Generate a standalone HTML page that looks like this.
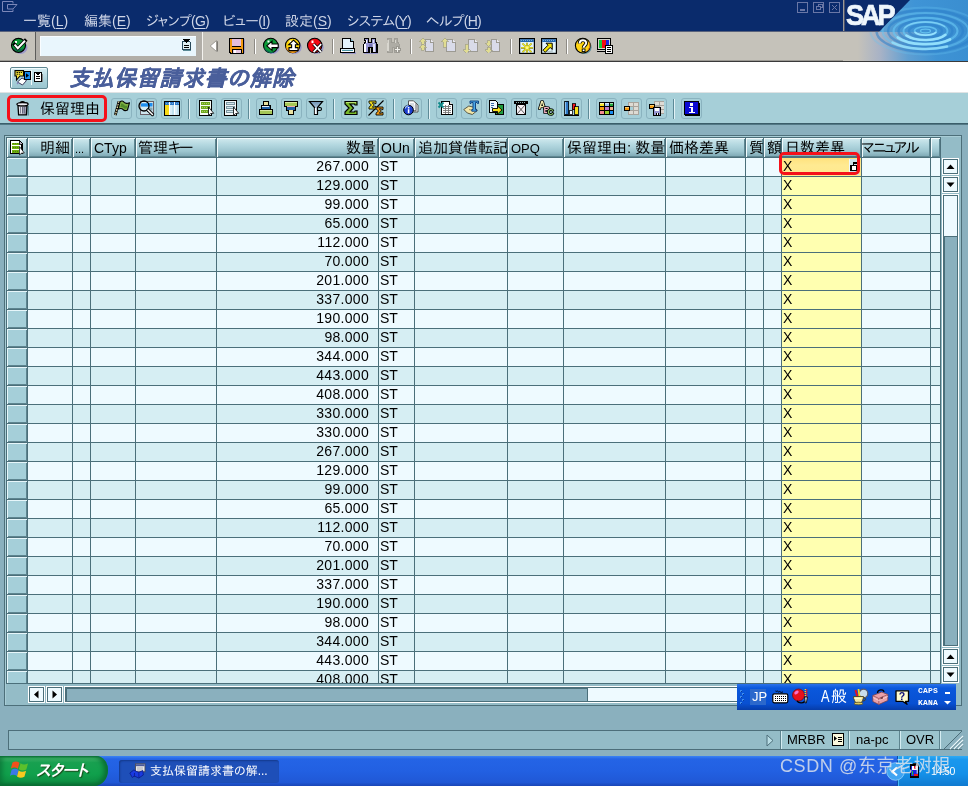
<!DOCTYPE html>
<html lang="ja"><head><meta charset="utf-8"><title>支払保留請求書の解除</title>
<style>
*{box-sizing:border-box;margin:0;padding:0}
html,body{width:968px;height:786px;overflow:hidden}
body{position:relative;will-change:transform;background:#8ab0be;font-family:"Liberation Sans","IPAPGothic","IPAGothic",sans-serif;font-size:14px;color:#000;line-height:1}
.abs{position:absolute}
svg{position:absolute;overflow:visible}
#menubar{left:0;top:0;width:968px;height:31px;background:#0a2b6c}
#menubar span.m{position:absolute;top:13px;color:#cdd4e6;font-size:14px;white-space:nowrap;line-height:16px}
#menubar u{text-decoration:underline;text-underline-offset:2px}
#stdbar{left:0;top:31px;width:968px;height:30px;background:#c5c2ba;border-top:1px solid #aeaba4}
#stdline{left:0;top:61px;width:968px;height:1px;background:#3a3a3a}
#titlebar{left:0;top:62px;width:968px;height:30px;background:#fff}
#titleline{left:0;top:92px;width:968px;height:1px;background:#dfe3e4}
#appbar{left:0;top:93px;width:968px;height:30px;background:#a6cfd8}
#appline{left:0;top:123px;width:968px;height:2px;background:linear-gradient(#2f505c,#5f8794)}
#title{left:69px;top:66px;font-size:22px;font-weight:bold;font-style:italic;color:#4a5f9b;-webkit-text-stroke:.2px #4a5f9b;white-space:nowrap;line-height:26px;letter-spacing:0.6px}
.tb{position:absolute;top:98px;width:21px;height:21px;border:1px solid #8ab3bf;border-radius:3px}
.tb svg{left:1px;top:1px;width:16px;height:16px}
.sep{position:absolute;top:99px;width:2px;height:20px;border-left:1px solid #5d8a97;border-right:1px solid #e2f2f6}
.ssep{position:absolute;top:39px;width:2px;height:15px;border-left:1px solid #8d8a84;border-right:1px solid #fff}
#frame{left:4px;top:135px;width:958px;height:571px;border:1px solid #4d6f7a;background:#94bcc7;box-shadow:inset 1px 1px 0 #a9cdd6}
#grid{left:6px;top:137px;width:935px;height:547px;overflow:hidden;background:#4b6f7a}
.r{position:absolute;left:0;width:934px;height:18px}
.r i{position:absolute;top:0;height:18px;font-style:normal;font-size:14px;line-height:16px;white-space:nowrap;overflow:hidden}
.r.a i{background:#eefaff}
.r.b i{background:#d6eef3}
.r i.s{left:1px;width:20px;background:#a5cfd9;box-shadow:inset 1px 1px 0 #e6f6fa,inset -1px -1px 0 #5d848f}
.r i.y{background:#ffffb0}
.r i.q{text-align:right;padding-right:9px;letter-spacing:.3px}
.r i.t{padding-left:1px}
.h{position:absolute;top:1px;height:19px;font-size:15px;line-height:19px;white-space:nowrap;overflow:hidden;background:linear-gradient(#d2eaef 0,#b4d8e0 35%,#9cc5cf 70%,#7ba6b2 100%);box-shadow:inset 1px 1px 0 #f2fbfd,inset -1px -1px 0 #5f8792;padding-left:3px}
.h b{font-weight:normal;font-size:14px}
.h b.d{font-size:11px;margin-left:-1px}
.sb{position:absolute;width:17px;height:17px;background:#eefaff;border:1px solid #fff;box-shadow:inset 0 0 0 1px #4b6f7a}
.sb svg{left:0;top:0;width:15px;height:15px}
.trk{position:absolute;background:#8ab0be;border:1px solid #fff;box-shadow:inset 1px 1px 0 1px #4b6f7a, inset -1px -1px 0 0 #4b6f7a}
.thumb{position:absolute;background:#eefaff;box-shadow:inset 0 0 0 1px #4b6f7a}
#status{left:8px;top:730px;width:954px;height:20px;border:1px solid #4d6f7a;background:#94bcc7;border-right:none}
.st{position:absolute;top:731px;height:18px;font-size:13px;line-height:18px;white-space:nowrap;background:#9bc4cd;border-left:1px solid #5d848f;box-shadow:inset 1px 0 0 #d4ecf1;padding-left:6px}
#taskbar{left:0;top:756px;width:968px;height:30px;background:linear-gradient(#3a84f4 0,#2464e6 10%,#2260e2 50%,#2058d6 88%,#1a46b6 100%)}
#start{left:0;top:756px;width:108px;height:30px;border-radius:0 12px 14px 0/0 14px 16px 0;background:linear-gradient(#0c7a3a 0,#3fb46a 7%,#18a050 22%,#10a04c 60%,#0e9044 85%,#0a6e34 100%);box-shadow:inset -4px 0 5px #0a6e34,inset 3px 0 4px rgba(10,110,52,.6);color:#fff;font-size:16px;letter-spacing:-.6px;font-weight:bold;font-style:italic;line-height:30px;padding-left:36px;white-space:nowrap;text-shadow:1px 1px 1px #1a4a1a}
#task{left:119px;top:760px;width:160px;height:23px;border-radius:3px;background:#1e4fb8;box-shadow:inset 1px 1px 2px #143a8c;color:#fff;font-size:12px;line-height:22px;padding-left:31px;white-space:nowrap}
#tray{left:897px;top:756px;width:71px;height:30px;background:linear-gradient(#2eaaf4 0,#1a98ee 12%,#1590e8 60%,#107ad0 100%);border-left:1px solid #0e4fa8;box-shadow:inset 1px 0 0 #44b8f8}
#clock{left:931px;top:764px;color:#fff;font-size:10.5px;line-height:14px;letter-spacing:-.5px}
#wm{left:780px;top:754px;font-size:18px;letter-spacing:.6px;line-height:24px;color:rgba(226,229,236,.82);white-space:nowrap;font-family:"Liberation Sans","Noto Sans CJK SC",sans-serif}
#ime{left:737px;top:684px;width:219px;height:26px;background:linear-gradient(#2a72ea 0,#0a58dc 16%,#0850d2 75%,#063ca8 100%)}
#ime span{position:absolute;color:#fff;white-space:nowrap}
.h s{text-decoration:none;letter-spacing:-2px}
</style></head>
<body>
<div id="menubar" class="abs">
<span class="m" style="left:23px">一覧(<u>L</u>)</span>
<span class="m" style="left:84px">編集(<u>E</u>)</span>
<span class="m" style="left:146px;letter-spacing:-.73px">ジャンプ(<u>G</u>)</span>
<span class="m" style="left:223px;letter-spacing:-.47px">ビュー(<u>I</u>)</span>
<span class="m" style="left:285px">設定(<u>S</u>)</span>
<span class="m" style="left:347px;letter-spacing:-.7px">システム(<u>Y</u>)</span>
<span class="m" style="left:426px;letter-spacing:-.75px">ヘルプ(<u>H</u>)</span>
<svg style="left:2px;top:1px;width:16px;height:11px" viewBox="0 0 16 11" fill="none" stroke="#7b87b9" stroke-width="1"><path d="M11 2.500v-2h-10.500v10h10.500v-2"/><path d="M15 3.500h-9.500v4.500h5.500z"/></svg>
</div>
<div id="stdbar" class="abs"></div>
<div class="abs" style="left:0;top:31px;width:968px;height:1px;background:#59627c"></div>
<div class="abs" style="left:35px;top:32px;width:167px;height:29px;background:#b1aea8;border-left:1px solid #5c5c5a"></div>
<div class="abs" style="left:202px;top:32px;width:1px;height:29px;background:#f4f3ef"></div>
<div id="cmd" class="abs" style="left:40px;top:36px;width:156px;height:20px;background:#e9f6fd;box-shadow:inset 1px 1px 0 #fafdff"></div>
<div class="abs" style="left:0;top:60px;width:968px;height:1px;background:#9b9993"></div>
<div id="stdline" class="abs"></div>
<!-- enter / check -->
<svg style="left:10px;top:37px;width:18px;height:18px" viewBox="0 0 18 18"><ellipse cx="10.5" cy="10.5" rx="7" ry="6.5" fill="#9b99c9"/><circle cx="8.5" cy="8.3" r="7" fill="#0b9a38" stroke="#000" stroke-width="1.2"/><path d="M3 11a6.3 6.3 0 0 0 11 0a8 5 0 0 1-11 0z" fill="#0a6a4a"/><rect x="5" y="4" width="2" height="2" fill="#fff"/><path d="M4.6 7.6l3.2 3.6L15 3.8" fill="none" stroke="#000" stroke-width="3.6" stroke-linecap="square"/><path d="M4.6 7.6l3.2 3.6L15 3.8" fill="none" stroke="#fff" stroke-width="2"/></svg>
<!-- command field dropdown -->
<svg style="left:181px;top:39px;width:11px;height:12px" viewBox="0 0 11 12" shape-rendering="crispEdges"><path d="M1.5 2.5h7l1 1v7h-8z" fill="#dff0f4" stroke="#27485a"/><path d="M2 11.5h8" stroke="#5a8a96"/><path d="M1 0h8l-4 4z" fill="#000"/><path d="M3 6.5h5M3 8.5h5" stroke="#000"/></svg>
<!-- small back triangle -->
<svg style="left:209px;top:39px;width:10px;height:14px" viewBox="0 0 10 14"><path d="M8.3 2.2v10.4" stroke="#7b7974" stroke-width="1.4"/><path d="M7.5 1.5v11L1.2 7z" fill="#fff" stroke="#9b9993" stroke-width="1"/></svg>
<!-- save -->
<svg style="left:229px;top:38px;width:16px;height:16px" viewBox="0 0 16 16" shape-rendering="crispEdges"><path d="M1 .5h13.5v14.5h-13l-1-1v-13z" fill="#f39a12" stroke="#000"/><rect x="15" y="1" width="1" height="14" fill="#9b99c9"/><rect x="3" y="1" width="9" height="7" fill="#e3bddc"/><rect x="3" y="0" width="9" height="1" fill="#000"/><rect x="3" y="8" width="9" height="1" fill="#000"/><rect x="3" y="11" width="9" height="4" fill="#e9c8e2" stroke="#000"/><rect x="5" y="12" width="2" height="3" fill="#fff"/></svg>
<div class="ssep" style="left:254px"></div>
<!-- back (green) -->
<svg style="left:262px;top:37px;width:19px;height:18px" viewBox="0 0 19 18"><ellipse cx="10.5" cy="10.3" rx="7.2" ry="6.6" fill="#9b99c9"/><circle cx="8.7" cy="8.5" r="7.2" fill="#0b9a38" stroke="#000" stroke-width="1.1"/><path d="M2.2 10a6.8 6.8 0 0 0 11 4.6a9 7 0 0 1-11-4.600z" fill="#0a6a52"/><rect x="5.500" y="3.500" width="2" height="2" fill="#fff"/><path d="M4.800 8.800l5.200-4.600v2.800h6.200v3.600h-6.200v2.800z" fill="#fff" stroke="#000" stroke-width="1.1" stroke-linejoin="miter"/></svg>
<!-- exit (yellow) -->
<svg style="left:284px;top:37px;width:19px;height:18px" viewBox="0 0 19 18"><ellipse cx="10.500" cy="10.300" rx="7.200" ry="6.600" fill="#9b99c9"/><circle cx="8.700" cy="8.500" r="7.200" fill="#ffd80a" stroke="#000" stroke-width="1.100"/><path d="M1.900 9.500a6.800 6.800 0 0 0 13.400 1.200a9 8 0 0 1-13.400-1.200z" fill="#f29a18"/><rect x="5.500" y="3.500" width="2" height="2" fill="#fff"/><path d="M9.500 3.200l4.800 4.600h-2.900v2.800h2.600v3h-9v-3h2.600v-2.800h-2.900z" fill="#fff" stroke="#000" stroke-width="1.100"/></svg>
<!-- cancel (red) -->
<svg style="left:306px;top:37px;width:19px;height:18px" viewBox="0 0 19 18"><ellipse cx="10.500" cy="10.300" rx="7.200" ry="6.600" fill="#9b99c9"/><circle cx="8.700" cy="8.500" r="7.200" fill="#f20a12" stroke="#000" stroke-width="1.100"/><path d="M2 10.500a6.800 6.800 0 0 0 9 4.600a9 7 0 0 1-9-4.600z" fill="#b0060c"/><rect x="5.500" y="3.500" width="2" height="2.600" fill="#fff"/><path d="M7.600 7.200l7.600 8M15.200 7.200l-7.600 8" stroke="#000" stroke-width="3.400"/><path d="M7.600 7.200l7.600 8M15.200 7.200l-7.600 8" stroke="#fff" stroke-width="1.700"/></svg>
<div class="ssep" style="left:332px"></div>
<!-- print -->
<svg style="left:340px;top:38px;width:17px;height:16px" viewBox="0 0 17 16" shape-rendering="crispEdges"><rect x="2" y="14" width="14" height="2" fill="#9b99c9"/><path d="M2.500 .5h8l2.500 2.500v8h-10.500z" fill="#e5f3fc" stroke="#000"/><path d="M10.500 .5v2.500h2.500" fill="#7fb4c4" stroke="#000"/><rect x=".5" y="10.500" width="14" height="4" fill="#fff" stroke="#000"/><rect x="2" y="12" width="11" height="1" fill="#4d98a8"/><rect x="1" y="11" width="13" height="1" fill="#d9ecf6"/></svg>
<!-- find -->
<svg style="left:362px;top:38px;width:17px;height:16px" viewBox="0 0 17 16" shape-rendering="crispEdges"><rect x="2" y="14.500" width="14" height="1.500" fill="#9b99c9"/><path d="M2.500 .5h4v4h3v-4h4v3.500l1.500 2v8.500h-5v-5h-3v5h-5v-8.500l1.500-2z" fill="#9a98d2" stroke="#000" stroke-width="1.100"/><rect x="2" y="6" width="1.500" height="8" fill="#fff"/><rect x="3.500" y="1.500" width="1.500" height="3.500" fill="#fff"/><rect x="11" y="6" width="1.500" height="8" fill="#e2e2f6"/><rect x="10.500" y="1.500" width="1.200" height="3.500" fill="#e2e2f6"/><rect x="6.500" y="5.500" width="3" height="3" fill="#7876b8"/></svg>
<!-- find next (disabled) -->
<svg style="left:385px;top:38px;width:17px;height:16px" viewBox="0 0 17 16" shape-rendering="crispEdges"><path d="M2.500 .5h3.500v4h3v-4h3.500v3.500l1.500 2v8.500h-5v-5h-2v5h-4.500v-8.500l1-2z" fill="#aeaca5" stroke="#a09e97" stroke-width="1"/><rect x="2" y="5" width="1.500" height="8" fill="#d8d6cf"/><rect x="3" y="1.500" width="1.200" height="3" fill="#d8d6cf"/><rect x="10" y="1.500" width="1.200" height="3" fill="#d8d6cf"/><path d="M9 11.500h7M12.500 8v7" stroke="#9a9891" stroke-width="3.400"/><path d="M10 11.500h5M12.500 9v5" stroke="#f1f0ec" stroke-width="1.500"/></svg>
<div class="ssep" style="left:410px"></div>
<!-- page navigation (disabled) -->
<svg style="left:419px;top:38px;width:16px;height:15px" viewBox="0 0 16 15" shape-rendering="crispEdges"><path d="M6.500 1.500h5l3 3v9h-8z" fill="#d9dbe9" stroke="#9c9a92"/><path d="M11.500 1.500v3h3" fill="#e9e9f2" stroke="#9c9a92"/><path d="M3.500 0l3.500 3.500h-2v2.500h-3v-2.500h-2zM3.500 6l3.500 3.500h-2v2.500h-3v-2.500h-2z" fill="#e1dd92" stroke="#a8a68c" stroke-width=".8"/></svg>
<svg style="left:441px;top:38px;width:16px;height:15px" viewBox="0 0 16 15" shape-rendering="crispEdges"><path d="M5.500 1.500h6l3 3v9h-9z" fill="#d9dbe9" stroke="#9c9a92"/><path d="M11.500 1.500v3h3" fill="#e9e9f2" stroke="#9c9a92"/><path d="M3.500 0l3.500 3.500h-2v5.500h-3v-5.500h-2z" fill="#e1dd92" stroke="#a8a68c" stroke-width=".8"/></svg>
<svg style="left:463px;top:38px;width:16px;height:16px" viewBox="0 0 16 16" shape-rendering="crispEdges"><path d="M5.500 1.500h6l3 3v9h-9z" fill="#d9dbe9" stroke="#9c9a92"/><path d="M11.500 1.500v3h3" fill="#e9e9f2" stroke="#9c9a92"/><path d="M3.500 15l3.500-3.500h-2v-5.500h-3v5.500h-2z" fill="#e1dd92" stroke="#a8a68c" stroke-width=".8"/></svg>
<svg style="left:485px;top:38px;width:16px;height:16px" viewBox="0 0 16 16" shape-rendering="crispEdges"><path d="M6.500 1.500h5l3 3v9h-8z" fill="#d9dbe9" stroke="#9c9a92"/><path d="M11.500 1.500v3h3" fill="#e9e9f2" stroke="#9c9a92"/><path d="M3.500 8.500l3.500-3.500h-2v-2.500h-3v2.500h-2zM3.500 15l3.500-3.500h-2v-2.500h-3v2.500h-2z" fill="#e1dd92" stroke="#a8a68c" stroke-width=".8"/></svg>
<div class="ssep" style="left:510px"></div>
<!-- new session -->
<svg style="left:519px;top:38px;width:16px;height:16px" viewBox="0 0 16 16"><rect x=".6" y=".6" width="14.800" height="14.800" fill="#e3f4fb" stroke="#000" stroke-width="1.200"/><rect x="1.200" y="1.200" width="13.600" height="2.800" fill="#2465ad"/><path d="M2 2.500h12" stroke="#8fc2e6" stroke-width=".8" stroke-dasharray="1 1"/><path d="M8 4.800v10M2 9.800h12M3.500 5.500l9 8.600M12.500 5.500l-9 8.600" stroke="#6a6a30" stroke-width="1.700"/><path d="M8 4.800v10M2 9.800h12M3.500 5.500l9 8.600M12.500 5.500l-9 8.600" stroke="#fbf01a" stroke-width="1.100"/><circle cx="8" cy="9.800" r="1.500" fill="#fdf68a"/></svg>
<!-- shortcut -->
<svg style="left:541px;top:38px;width:16px;height:16px" viewBox="0 0 16 16"><rect x=".6" y=".6" width="14.800" height="14.800" fill="#e3f4fb" stroke="#000" stroke-width="1.200"/><rect x="1.200" y="1.200" width="13.600" height="2.800" fill="#2465ad"/><path d="M2 2.500h12" stroke="#8fc2e6" stroke-width=".8" stroke-dasharray="1 1"/><path d="M11 6v7.500h-6" fill="none" stroke="#b7c6cc" stroke-width="1.600"/><path d="M5 5.200h6.200v6.200l-2-2-5 5-2.200-2.200 5-5z" fill="#f4e408" stroke="#000" stroke-width="1"/></svg>
<div class="ssep" style="left:566px"></div>
<!-- help -->
<svg style="left:574px;top:37px;width:19px;height:18px" viewBox="0 0 19 18"><ellipse cx="10.300" cy="10.200" rx="7.300" ry="6.800" fill="#5f8f9a"/><circle cx="8.800" cy="8.600" r="7.400" fill="#ffd414" stroke="#000" stroke-width="1.100"/><path d="M14.500 3.800a7 7 0 0 1-3 11.300a9 9 0 0 0 3-11.300z" fill="#ee8a12"/><path d="M5.600 6.400c0-4.200 6.600-4.200 6.600-.4c0 2.400-2.600 2.400-2.600 4.800" fill="none" stroke="#000" stroke-width="3.600"/><path d="M5.600 6.400c0-4.200 6.600-4.200 6.600-.4c0 2.400-2.600 2.400-2.600 4.800" fill="none" stroke="#fff" stroke-width="1.900"/><rect x="8.200" y="12" width="2.800" height="2.600" fill="#fff" stroke="#000" stroke-width=".9"/></svg>
<!-- layout / monitor -->
<svg style="left:597px;top:38px;width:16px;height:16px" viewBox="0 0 16 16" shape-rendering="crispEdges"><rect x="0" y="0" width="14" height="12" fill="#000"/><rect x="1" y="1" width="12" height="10" fill="#d4d2cb"/><rect x="2" y="2" width="3" height="8" fill="#1ec43a"/><rect x="5" y="2" width="4" height="8" fill="#f20a12"/><rect x="9" y="2" width="3" height="8" fill="#1a22e0"/><rect x="1" y="12" width="12" height="1" fill="#d4d2cb"/><rect x="0" y="13" width="9" height="1" fill="#000"/><rect x="8" y="7" width="8" height="9" fill="#000"/><rect x="9" y="8" width="6" height="7" fill="#fff"/><rect x="10" y="9" width="4" height="1" fill="#000"/><rect x="10" y="11" width="4" height="1" fill="#000"/><rect x="10" y="13" width="4" height="1" fill="#000"/></svg>
<!-- window controls -->
<svg style="left:797px;top:2px;width:44px;height:11px" viewBox="0 0 44 11" shape-rendering="crispEdges"><g fill="none" stroke="#6977a6"><rect x=".5" y=".5" width="10" height="10"/><rect x="16.500" y=".5" width="10" height="10"/><rect x="32.500" y=".5" width="10" height="10"/><path d="M3 8h5M3 7h5" /><rect x="21.500" y="2.500" width="4" height="3"/><rect x="19.500" y="4.500" width="4" height="3" fill="#0a2b6c"/><path d="M35 3l5 5M40 3l-5 5" shape-rendering="auto"/></g></svg>
<!-- SAP logo & water -->
<svg style="left:843px;top:0;width:125px;height:61px" viewBox="0 0 125 61">
<defs>
<linearGradient id="wfade" x1="0" x2="1" y1="0" y2="0"><stop offset="0" stop-color="#c5c2ba"/><stop offset=".12" stop-color="#c5c2ba"/><stop offset=".3" stop-color="#a7b2c6"/><stop offset=".52" stop-color="#5f9fd2"/><stop offset=".75" stop-color="#3f93d4"/><stop offset="1" stop-color="#3a8fd2"/></linearGradient>
<linearGradient id="wtop" x1="0" x2="1" y1="0" y2="0"><stop offset="0" stop-color="#5b9fd0"/><stop offset=".4" stop-color="#3f94d6"/><stop offset="1" stop-color="#3a8ed0"/></linearGradient>
<clipPath id="wc"><path d="M67 0H125V61H0V32H36z"/></clipPath>
</defs>
<rect x="0" y="0" width="125" height="31" fill="#0a2b6c"/>
<rect x="0" y="0" width="1" height="31" fill="#9a9a98"/><rect x="1" y="0" width="1" height="31" fill="#4a5068"/>
<rect x="0" y="32" width="125" height="29" fill="url(#wfade)"/>
<path d="M67 0H125V32H36z" fill="url(#wtop)"/>
<g clip-path="url(#wc)" fill="none">
<ellipse cx="82.5" cy="31" rx="16.5" ry="6.6" stroke="#2c7fca" stroke-width="2.400" opacity=".55"/>
<ellipse cx="82.5" cy="31" rx="27" ry="11" stroke="#2c7fca" stroke-width="2.400" opacity=".55"/>
<ellipse cx="82.5" cy="31" rx="37.5" ry="15.6" stroke="#2c7fca" stroke-width="2.400" opacity=".55"/>
<ellipse cx="82.5" cy="31" rx="49" ry="20.7" stroke="#2c7fca" stroke-width="2.400" opacity=".55"/>
<ellipse cx="82.5" cy="31" rx="5" ry="1.8" stroke="#66c4f2" stroke-width="1.2" opacity="0.9"/>
<ellipse cx="82.5" cy="31" rx="11" ry="4.2" stroke="#66c4f2" stroke-width="1.6" opacity="0.85"/>
<ellipse cx="82.5" cy="31" rx="22" ry="9" stroke="#66c4f2" stroke-width="2" opacity="0.75"/>
<ellipse cx="82.5" cy="31" rx="32" ry="13.2" stroke="#66c4f2" stroke-width="2.2" opacity="0.65"/>
<ellipse cx="82.5" cy="31" rx="43" ry="18" stroke="#66c4f2" stroke-width="2.2" opacity="0.5"/>
<ellipse cx="82.5" cy="31" rx="55" ry="23.5" stroke="#66c4f2" stroke-width="2" opacity="0.3"/>
<path d="M92.8 32.4A11 4.2 0 0 1 72.2 32.4" stroke="#9be6ff" stroke-width="1.8" opacity="0.9" stroke-linecap="round"/>
<path d="M102.4 34.8A22 9 0 0 1 63.4 35.5" stroke="#9be6ff" stroke-width="2.6" opacity="0.9" stroke-linecap="round"/>
<path d="M107.0 39.5A32 13.2 0 0 1 54.8 37.6" stroke="#9be6ff" stroke-width="2.8" opacity="0.85" stroke-linecap="round"/>
<path d="M104.0 46.6A43 18 0 0 1 49.6 42.6" stroke="#9be6ff" stroke-width="2.6" opacity="0.75" stroke-linecap="round"/>
<path d="M61.8 27.9A22 9 0 0 1 101.6 26.5" stroke="#9be6ff" stroke-width="1.4" opacity="0.5" stroke-linecap="round"/>
</g>
<text x="3" y="25.200" font-family="Liberation Sans,sans-serif" font-weight="bold" font-size="29.500" fill="#eef6fc" stroke="#eef6fc" stroke-width=".7" letter-spacing="-3.400" textLength="46.500" lengthAdjust="spacingAndGlyphs">SAP</text>
</svg>
<div id="titlebar" class="abs"></div>
<div id="titleline" class="abs"></div>
<div id="title" class="abs">支払保留請求書の解除</div>
<div class="abs" style="left:10px;top:67px;width:38px;height:22px;border:1px solid #5f8792;border-radius:2px;background:linear-gradient(#d8eef2,#a9d1da 60%,#9cc6d0);box-shadow:inset 1px 1px 0 #f2fbfd"></div>
<svg style="left:14px;top:70px;width:17px;height:16px" viewBox="0 0 17 16"><path d="M8 8l4.500 2.500-4 4.500-5-3z" fill="#fff" stroke="#3a3a5a" stroke-width="1"/><path d="M4.500 12.500l-1.500 1.500" stroke="#8a88c0" stroke-width="1.200"/><rect x="10.500" y="1.500" width="5.500" height="8" fill="#1a8cf0" stroke="#000" stroke-width="1" shape-rendering="crispEdges"/><path d="M12 3.200v4.600l3-2.300z" fill="#000"/><path d="M1 .6h8.500v5.400h-3.500l-3.500 4v-4h-1.500z" fill="#f8e83a" stroke="#000" stroke-width="1.100" stroke-linejoin="miter"/><path d="M2.500 2.500h5.500M2.500 4.200h4" stroke="#000" stroke-width=".9" stroke-dasharray="1.500 .7"/></svg>
<div class="abs" style="left:31px;top:70px;width:1px;height:15px;background:#f2fbfd"></div>
<svg style="left:34px;top:71px;width:9px;height:12px" viewBox="0 0 9 12" shape-rendering="crispEdges"><path d="M.5 1.500h7v9h-7z" fill="#fff" stroke="#000"/><path d="M1 1h6l-3 3.500z" fill="#000"/><path d="M2 5.500h4M2 7.500h4" stroke="#000"/><rect x="8" y="3" width="1" height="8" fill="#8a8a8a"/></svg>
<div id="appbar" class="abs"></div>
<div id="appline" class="abs"></div>
<!-- red highlighted button -->
<div class="abs" style="left:7px;top:95px;width:100px;height:27px;border:3px solid #f5111a;border-radius:5px"></div>
<svg style="left:16px;top:101px;width:13px;height:15px" viewBox="0 0 13 15"><defs><linearGradient id="tg" x1="0" x2="1" y1="0" y2="0"><stop offset="0" stop-color="#f4f4f8"/><stop offset=".45" stop-color="#c9c9d6"/><stop offset="1" stop-color="#8e8ea6"/></linearGradient></defs><rect x="11.500" y="5" width="1.500" height="9.500" fill="#5f8f9a"/><path d="M2 4.500h9l-.6 9.300h-7.800z" fill="url(#tg)" stroke="#000" stroke-width="1.300"/><path d="M4.800 6v6.500M6.500 6v6.500M8.200 6v6.500" stroke="#4e4e66" stroke-width=".9"/><path d="M5.600 6v6.500" stroke="#fff" stroke-width=".7"/><ellipse cx="6.500" cy="3.200" rx="5.600" ry="1.700" fill="#eeeef4" stroke="#000" stroke-width="1.300"/><path d="M4.500 1.300c1-.9 3-.9 4 0" fill="none" stroke="#000" stroke-width="1.200"/></svg>
<div class="abs" style="left:40px;top:100px;font-size:15px;line-height:18px;white-space:nowrap">保留理由</div>
<!-- toolbar buttons -->
<div class="tb" style="left:111px"><svg viewBox="0 0 16 16"><path d="M6 1.300L2.300 15.200" stroke="#000" stroke-width="2.700"/><path d="M6 1.300L2.300 15.200" stroke="#ecdca6" stroke-width="1.300" stroke-dasharray="1.700 1"/><path d="M7 1.800c1.500-1.200 3-1 4.200.6c1.200 1.300 3 1.200 5.300.3l-2 7.300c-1.800.9-3.300.9-4.300-.4c-1.200-1.500-2.800-1.400-5-.6z" fill="#7fb044" stroke="#000" stroke-width="1.100" stroke-linejoin="round"/><path d="M8.300 3.500c1.300-.4 2 .6 2.800 1.500s2 1 3.300.7l-.9 3c-1.200.3-2 .1-2.800-.8s-1.800-1.200-3.300-.9z" fill="#4f8a2a"/></svg></div>
<div class="tb" style="left:136px"><svg viewBox="0 0 16 16"><rect x="2.500" y="1.500" width="13" height="13" fill="#cfe6ee" stroke="#6a5f66" stroke-width="1"/><rect x="3.500" y="3" width="11" height="3.500" fill="#1e8ef0"/><rect x="11" y="7.500" width="3.500" height="3" fill="#86a6b2"/><circle cx="6" cy="6" r="5" fill="none" stroke="#000" stroke-width="1.300"/><circle cx="6" cy="6" r="4" fill="#dff2fa" opacity=".55"/><rect x="3" y="3.500" width="7" height="3" fill="#1e8ef0"/><path d="M10 10l4.500 4.500" stroke="#000" stroke-width="3.200" stroke-linecap="round"/><path d="M10 10l4.500 4.500" stroke="#fff" stroke-width="1.500" stroke-linecap="round"/></svg></div>
<div class="tb" style="left:161px"><svg viewBox="0 0 16 16" shape-rendering="crispEdges"><rect x="1" y="1" width="16" height="15" fill="#000"/><rect x="2" y="2" width="14" height="13" fill="#d9eef8"/><rect x="2" y="2" width="14" height="3" fill="#2c78c6"/><path d="M3 3.500h13" stroke="#6aa8e4" stroke-dasharray="1 1"/><rect x="2" y="5" width="4" height="10" fill="#f8da18"/><rect x="6" y="2" width="1" height="13" fill="#fff"/><rect x="11" y="2" width="1" height="13" fill="#fff"/><rect x="9" y="5" width="2" height="10" fill="#bfe0ee"/><rect x="14" y="5" width="2" height="10" fill="#bfe0ee"/></svg></div>
<div class="sep" style="left:188px"></div>
<div class="tb" style="left:196px"><svg viewBox="0 0 16 16" shape-rendering="crispEdges"><rect x="1" y="0" width="13" height="16" fill="#000"/><rect x="2" y="1" width="11" height="14" fill="#f6faf4"/><rect x="3" y="2" width="9" height="3" fill="#6fa81e"/><rect x="3" y="6" width="9" height="3" fill="#6fa81e"/><rect x="3" y="10" width="9" height="3" fill="#6fa81e"/><path d="M4 3.500h7M4 7.500h7M4 11.500h7" stroke="#a8d060" stroke-dasharray="1 1"/><path d="M10.500 7v8.500l2.200-2 3 -.2z" fill="#fff" stroke="#000" stroke-width=".8" shape-rendering="auto"/></svg></div>
<div class="tb" style="left:221px"><svg viewBox="0 0 16 16" shape-rendering="crispEdges"><rect x="1" y="0" width="13" height="16" fill="#000"/><rect x="2" y="1" width="11" height="14" fill="#f3f7f8"/><rect x="3" y="2" width="9" height="3" fill="#7e98a2"/><rect x="4" y="3" width="7" height="1" fill="#d3e7ee"/><rect x="3" y="6" width="9" height="3" fill="#7e98a2"/><rect x="4" y="7" width="7" height="1" fill="#d3e7ee"/><rect x="3" y="10" width="9" height="3" fill="#7e98a2"/><rect x="4" y="11" width="7" height="1" fill="#d3e7ee"/><path d="M10.500 7v8.500l2.200-2 3 -.2z" fill="#fff" stroke="#000" stroke-width=".8" shape-rendering="auto"/></svg></div>
<div class="sep" style="left:248px"></div>
<div class="tb" style="left:256px"><svg viewBox="0 0 16 16" shape-rendering="crispEdges"><rect x="5" y="1" width="6" height="5" fill="#000"/><rect x="6" y="2" width="4" height="4" fill="#e9e1a2"/><rect x="3" y="5" width="10" height="5" fill="#000"/><rect x="4" y="6" width="8" height="3" fill="#1f5fa8"/><rect x="4" y="6" width="7" height="1" fill="#e6f0fa"/><rect x="1" y="9" width="14" height="6" fill="#000"/><rect x="2" y="10" width="12" height="4" fill="#a5c656"/><rect x="2" y="10" width="12" height="1" fill="#d6e8a0"/></svg></div>
<div class="tb" style="left:281px"><svg viewBox="0 0 16 16" shape-rendering="crispEdges"><rect x="1" y="1" width="14" height="6" fill="#000"/><rect x="2" y="2" width="12" height="4" fill="#a5c656"/><rect x="2" y="2" width="12" height="1" fill="#d6e8a0"/><rect x="3" y="6" width="10" height="5" fill="#000"/><rect x="4" y="7" width="8" height="3" fill="#1f5fa8"/><rect x="4" y="6" width="8" height="1" fill="#f4b0b0"/><rect x="5" y="10" width="6" height="5" fill="#000"/><rect x="6" y="10" width="4" height="4" fill="#e9e1a2"/></svg></div>
<div class="tb" style="left:306px"><svg viewBox="0 0 16 16"><defs><linearGradient id="fg" x1="0" x2="0" y1="0" y2="1"><stop offset="0" stop-color="#6f93b4"/><stop offset="1" stop-color="#e8f2f8"/></linearGradient></defs><path d="M1.500 1.500h13l-5 6v7h-3v-7z" fill="url(#fg)" stroke="#000" stroke-width="1.200" stroke-linejoin="miter"/><path d="M7.500 8v6" stroke="#fff" stroke-width="1.400"/><path d="M9.500 10.500h2.500a1.500 1.500 0 0 0 0-3h-1.500" fill="none" stroke="#000" stroke-width="1.100"/></svg></div>
<div class="sep" style="left:333px"></div>
<div class="tb" style="left:341px"><svg viewBox="0 0 16 16"><path d="M2 1.500h12v3.500h-2l-.5-1h-4.500l3.500 4-3.500 4h4.500l.5-1h2v3.500h-12v-2.500l4-4-4-4z" fill="#79ba2a" stroke="#000" stroke-width="1.200" stroke-linejoin="miter"/><path d="M3 2.500h10" stroke="#b8e070" stroke-width="1"/></svg></div>
<div class="tb" style="left:366px"><svg viewBox="0 0 16 16"><path d="M15.500 .5L.5 15.500" stroke="#000" stroke-width="1.100"/><path d="M1 1h7v2.600h-1.200l-.3-.8h-2.200l2 2.200-2 2.200h2.200l.3-.8h1.200v2.600h-7v-1.800l2.400-2.200-2.400-2.200z" fill="#f6e01a" stroke="#000" stroke-width=".9"/><path d="M8 7h7v2.600h-1.200l-.3-.8h-2.200l2 2.200-2 2.200h2.200l.3-.8h1.200v2.600h-7v-1.800l2.400-2.200-2.400-2.200z" fill="#f59a10" stroke="#000" stroke-width=".9"/></svg></div>
<div class="sep" style="left:393px"></div>
<div class="tb" style="left:401px"><svg viewBox="0 0 16 16"><path d="M7.500 2.500h5l2.500 2.500v7h-7.500z" fill="#f4f8fa" stroke="#4a4a4a" stroke-width=".9"/><path d="M5.500 .8h5l2.500 2.500v7.500h-7.500z" fill="#fff" stroke="#4a4a4a" stroke-width=".9"/><path d="M7 4h4M7 6h4.500M7 8h4.500" stroke="#9ab" stroke-width=".8"/><circle cx="5.500" cy="10" r="4.800" fill="#1c3fd0" stroke="#000" stroke-width="1"/><path d="M2.200 8.500a3.600 3.600 0 0 1 3.300-2.800" stroke="#9ec0ff" stroke-width="1.200" fill="none"/><rect x="4.800" y="7" width="1.600" height="1.500" fill="#fff"/><rect x="4.800" y="9.200" width="1.600" height="4" fill="#fff"/></svg></div>
<div class="sep" style="left:428px"></div>
<div class="tb" style="left:436px"><svg viewBox="0 0 16 16" shape-rendering="crispEdges"><path d="M3.500 1.500h8l3 3v10h-11z" fill="#fff" stroke="#000"/><path d="M11.500 1.500v3h3" fill="#d8d8d8" stroke="#000"/><path d="M5 6.500h8M5 8.500h8M5 10.500h8M5 12.500h8M7.500 5v9M10.500 5v9" stroke="#7a7a7a" stroke-width=".9"/><path d="M.5 2.500l5 5M5.500 2.500l-5 5" stroke="#0f8a8a" stroke-width="1.900" shape-rendering="auto"/></svg></div>
<div class="tb" style="left:461px"><svg viewBox="0 0 16 16"><path d="M.8 9.500l5-3.500 6 1.500 2.500 3-5 4-5-1.500z" fill="#f2e6a8" stroke="#4a4a3a" stroke-width=".9"/><path d="M6 9.500l4 1 2-1.500" fill="none" stroke="#8a7a4a" stroke-width=".8"/><path d="M7 1h8.500v2.500h-1l-.4-1h-1.600v7h1.200v1.700h-4.900v-1.700h1.200v-7h-1.600l-.4 1h-1z" fill="#4aa8e8" stroke="#0a3a7a" stroke-width=".9"/></svg></div>
<div class="tb" style="left:486px"><svg viewBox="0 0 16 16" shape-rendering="crispEdges"><rect x="7.500" y="4.500" width="8" height="10" fill="#1e9a3c" stroke="#000"/><path d="M1.500 .5h6l2 2v10h-8z" fill="#f0f8ff" stroke="#000"/><path d="M3 3.500h3M3 5.500h3M3 7.500h2" stroke="#3a6aa8"/><path d="M4.500 8.500h5v-2.500l4.500 4-4.500 4v-2.500h-5z" fill="#f6e01a" stroke="#000" stroke-width=".9" shape-rendering="auto"/></svg></div>
<div class="tb" style="left:511px"><svg viewBox="0 0 16 16" shape-rendering="crispEdges"><rect x="1" y="1" width="14" height="3" fill="#000"/><path d="M3 2.500h10" stroke="#8aa" stroke-dasharray="1 1"/><rect x="3.500" y="4.500" width="9" height="10" fill="#f6f0f4" stroke="#000"/><path d="M4 5l8 9M12 5l-8 9" stroke="#4a4a4a" stroke-width=".9" shape-rendering="auto"/></svg></div>
<div class="tb" style="left:536px"><svg viewBox="0 0 16 16"><g font-family="Liberation Sans,sans-serif" font-weight="bold" stroke="#000" stroke-width="1.700" stroke-linejoin="round" paint-order="stroke"><text x=".5" y="9" font-size="10" fill="#f4ecb0">A</text><text x="5.500" y="12.500" font-size="9" fill="#f2b0c0">B</text><text x="9.500" y="15.300" font-size="8.500" fill="#8ac868">C</text></g></svg></div>
<div class="tb" style="left:561px"><svg viewBox="0 0 16 16" shape-rendering="crispEdges"><rect x="1.500" y="1" width="4" height="13.500" fill="#2f78c4" stroke="#000" stroke-width=".8"/><rect x="2" y="1.500" width="1.200" height="12.500" fill="#8cc0ee"/><rect x="9" y="3.500" width="3.500" height="6" fill="#f01820" stroke="#000" stroke-width=".8"/><rect x="6.500" y="10" width="3" height="4.500" fill="#fff" stroke="#000" stroke-width=".8"/><rect x="11.500" y="6.500" width="3.500" height="8" fill="#f6e01a" stroke="#000" stroke-width=".8"/><rect x="1" y="14.500" width="15" height="1" fill="#000"/></svg></div>
<div class="sep" style="left:588px"></div>
<div class="tb" style="left:596px"><svg viewBox="0 0 16 16" shape-rendering="crispEdges"><rect x=".5" y="2" width="15.500" height="12.800" fill="#000"/><rect x="1.500" y="3" width="4" height="3" fill="#f6e62a"/><rect x="6.500" y="3" width="4" height="3" fill="#9cc4f0"/><rect x="11.500" y="3" width="3.500" height="3" fill="#22a83c"/><rect x="1.500" y="7" width="4" height="3" fill="#f59a10"/><rect x="6.500" y="7" width="4" height="3" fill="#c07ac8"/><rect x="11.500" y="7" width="3.500" height="3" fill="#f2b088"/><rect x="1.500" y="11" width="4" height="3" fill="#f28a92"/><rect x="6.500" y="11" width="4" height="3" fill="#9ad02a"/><rect x="11.500" y="11" width="3.500" height="3" fill="#1a8cf0"/><path d="M1.500 3.500h4M6.500 3.500h4M11.500 3.500h3.500" stroke="#fff" opacity=".6"/></svg></div>
<div class="tb" style="left:621px"><svg viewBox="0 0 16 16" shape-rendering="crispEdges"><rect x="5" y="2" width="11" height="13" fill="#a8a49c"/><g fill="#dedbd4"><rect x="6" y="3" width="4" height="3"/><rect x="11" y="3" width="4" height="3"/><rect x="11" y="7" width="4" height="3"/><rect x="6" y="11" width="4" height="3"/><rect x="11" y="11" width="4" height="3"/></g><rect x="6" y="7" width="4" height="3" fill="#a6cfd8"/><rect x="1.500" y="6.500" width="5" height="4" fill="#f59a10" stroke="#000"/><rect x="2" y="7" width="4" height="1" fill="#fcd070"/></svg></div>
<div class="tb" style="left:646px"><svg viewBox="0 0 16 16" shape-rendering="crispEdges"><rect x="6" y="1" width="10" height="13" fill="#a8a49c"/><g fill="#dedbd4"><rect x="7" y="2" width="4" height="3"/><rect x="12" y="2" width="4" height="3"/><rect x="12" y="6" width="4" height="3"/><rect x="12" y="10" width="4" height="3"/></g><rect x="1.500" y="4.500" width="5" height="4" fill="#f59a10" stroke="#000"/><rect x="2" y="5" width="4" height="1" fill="#fcd070"/><rect x="5.500" y="7.500" width="7" height="7.500" fill="#9a98d2" stroke="#000"/><rect x="7" y="8" width="4" height="3" fill="#fff"/><rect x="7.500" y="12.500" width="3" height="2.500" fill="#000"/><rect x="8.500" y="13" width="1" height="2" fill="#fff"/></svg></div>
<div class="sep" style="left:673px"></div>
<div class="tb" style="left:681px"><svg viewBox="0 0 16 16" shape-rendering="crispEdges"><rect x="15" y="3" width="1.500" height="12.500" fill="#000"/><rect x="2" y="14" width="14" height="1.500" fill="#000"/><rect x="1.500" y="1.500" width="13.500" height="12.500" fill="#0a0ad2" stroke="#000"/><rect x="7" y="3" width="3" height="2.500" fill="#fff"/><path d="M5.500 6.500h4.500v5h2v1.500h-6.500v-1.500h2v-3.500h-2z" fill="#fff"/></svg></div>
<div id="frame" class="abs"></div>
<div id="grid" class="abs">
<div class="h" style="left:1px;width:20px;padding:0"><svg style="left:2px;top:2px;width:16px;height:15px" viewBox="0 0 16 15" shape-rendering="crispEdges"><path d="M1.500 .8h8.500l3 3v10h-11.500z" fill="#fff" stroke="#000" stroke-width="1.200"/><path d="M10 1v3h3" fill="#b8b0c0" stroke="#000" stroke-width=".8"/><rect x="3" y="2.500" width="7" height="2.600" fill="#72b010"/><rect x="3" y="6.300" width="7" height="2.600" fill="#72b010"/><rect x="3" y="10.100" width="7" height="2.600" fill="#72b010"/><path d="M4 3.800h5M4 7.600h5M4 11.400h5" stroke="#4e8808" stroke-dasharray="1 1"/><path d="M10.500 6.500v8.500l2-1.800 2.800-.2z" fill="#fff" stroke="#000" stroke-width=".7" shape-rendering="auto"/></svg></div><div class="h" style="left:22px;width:44px;text-align:right;padding-right:2px">明細</div><div class="h" style="left:67px;width:17px"><b class="d">...</b></div><div class="h" style="left:85px;width:44px"><b>CTyp</b></div><div class="h" style="left:130px;width:80px;padding-left:2px">管理<s>キー</s></div><div class="h" style="left:211px;width:161px;text-align:right;padding-right:2px">数量</div><div class="h" style="left:373px;width:35px;padding-left:2px"><b>OUn</b></div><div class="h" style="left:409px;width:92px">追加貸借転記</div><div class="h" style="left:502px;width:55px"><b style="font-size:13px">OPQ</b></div><div class="h" style="left:558px;width:101px">保留理由: 数量</div><div class="h" style="left:660px;width:79px">価格差異</div><div class="h" style="left:740px;width:17px">質</div><div class="h" style="left:758px;width:17px">額</div><div class="h" style="left:776px;width:79px">日数差異</div><div class="h" style="left:856px;width:68px;padding-left:0;text-indent:-1px"><s>マニュアル</s></div><div class="h" style="left:925px;width:9px"></div>
<div class="r a" style="top:21px"><i class="s"></i><i style="left:22px;width:44px"></i><i style="left:67px;width:17px"></i><i style="left:85px;width:44px"></i><i style="left:130px;width:80px"></i><i class="q" style="left:211px;width:161px">267.000</i><i class="t" style="left:373px;width:35px">ST</i><i style="left:409px;width:92px"></i><i style="left:502px;width:55px"></i><i style="left:558px;width:101px"></i><i style="left:660px;width:79px"></i><i style="left:740px;width:17px"></i><i style="left:758px;width:17px"></i><i class="y t" style="left:776px;width:79px">X</i><i style="left:856px;width:68px"></i><i style="left:925px;width:9px"></i></div>
<div class="r b" style="top:40px"><i class="s"></i><i style="left:22px;width:44px"></i><i style="left:67px;width:17px"></i><i style="left:85px;width:44px"></i><i style="left:130px;width:80px"></i><i class="q" style="left:211px;width:161px">129.000</i><i class="t" style="left:373px;width:35px">ST</i><i style="left:409px;width:92px"></i><i style="left:502px;width:55px"></i><i style="left:558px;width:101px"></i><i style="left:660px;width:79px"></i><i style="left:740px;width:17px"></i><i style="left:758px;width:17px"></i><i class="y t" style="left:776px;width:79px">X</i><i style="left:856px;width:68px"></i><i style="left:925px;width:9px"></i></div>
<div class="r a" style="top:59px"><i class="s"></i><i style="left:22px;width:44px"></i><i style="left:67px;width:17px"></i><i style="left:85px;width:44px"></i><i style="left:130px;width:80px"></i><i class="q" style="left:211px;width:161px">99.000</i><i class="t" style="left:373px;width:35px">ST</i><i style="left:409px;width:92px"></i><i style="left:502px;width:55px"></i><i style="left:558px;width:101px"></i><i style="left:660px;width:79px"></i><i style="left:740px;width:17px"></i><i style="left:758px;width:17px"></i><i class="y t" style="left:776px;width:79px">X</i><i style="left:856px;width:68px"></i><i style="left:925px;width:9px"></i></div>
<div class="r b" style="top:78px"><i class="s"></i><i style="left:22px;width:44px"></i><i style="left:67px;width:17px"></i><i style="left:85px;width:44px"></i><i style="left:130px;width:80px"></i><i class="q" style="left:211px;width:161px">65.000</i><i class="t" style="left:373px;width:35px">ST</i><i style="left:409px;width:92px"></i><i style="left:502px;width:55px"></i><i style="left:558px;width:101px"></i><i style="left:660px;width:79px"></i><i style="left:740px;width:17px"></i><i style="left:758px;width:17px"></i><i class="y t" style="left:776px;width:79px">X</i><i style="left:856px;width:68px"></i><i style="left:925px;width:9px"></i></div>
<div class="r a" style="top:97px"><i class="s"></i><i style="left:22px;width:44px"></i><i style="left:67px;width:17px"></i><i style="left:85px;width:44px"></i><i style="left:130px;width:80px"></i><i class="q" style="left:211px;width:161px">112.000</i><i class="t" style="left:373px;width:35px">ST</i><i style="left:409px;width:92px"></i><i style="left:502px;width:55px"></i><i style="left:558px;width:101px"></i><i style="left:660px;width:79px"></i><i style="left:740px;width:17px"></i><i style="left:758px;width:17px"></i><i class="y t" style="left:776px;width:79px">X</i><i style="left:856px;width:68px"></i><i style="left:925px;width:9px"></i></div>
<div class="r b" style="top:116px"><i class="s"></i><i style="left:22px;width:44px"></i><i style="left:67px;width:17px"></i><i style="left:85px;width:44px"></i><i style="left:130px;width:80px"></i><i class="q" style="left:211px;width:161px">70.000</i><i class="t" style="left:373px;width:35px">ST</i><i style="left:409px;width:92px"></i><i style="left:502px;width:55px"></i><i style="left:558px;width:101px"></i><i style="left:660px;width:79px"></i><i style="left:740px;width:17px"></i><i style="left:758px;width:17px"></i><i class="y t" style="left:776px;width:79px">X</i><i style="left:856px;width:68px"></i><i style="left:925px;width:9px"></i></div>
<div class="r a" style="top:135px"><i class="s"></i><i style="left:22px;width:44px"></i><i style="left:67px;width:17px"></i><i style="left:85px;width:44px"></i><i style="left:130px;width:80px"></i><i class="q" style="left:211px;width:161px">201.000</i><i class="t" style="left:373px;width:35px">ST</i><i style="left:409px;width:92px"></i><i style="left:502px;width:55px"></i><i style="left:558px;width:101px"></i><i style="left:660px;width:79px"></i><i style="left:740px;width:17px"></i><i style="left:758px;width:17px"></i><i class="y t" style="left:776px;width:79px">X</i><i style="left:856px;width:68px"></i><i style="left:925px;width:9px"></i></div>
<div class="r b" style="top:154px"><i class="s"></i><i style="left:22px;width:44px"></i><i style="left:67px;width:17px"></i><i style="left:85px;width:44px"></i><i style="left:130px;width:80px"></i><i class="q" style="left:211px;width:161px">337.000</i><i class="t" style="left:373px;width:35px">ST</i><i style="left:409px;width:92px"></i><i style="left:502px;width:55px"></i><i style="left:558px;width:101px"></i><i style="left:660px;width:79px"></i><i style="left:740px;width:17px"></i><i style="left:758px;width:17px"></i><i class="y t" style="left:776px;width:79px">X</i><i style="left:856px;width:68px"></i><i style="left:925px;width:9px"></i></div>
<div class="r a" style="top:173px"><i class="s"></i><i style="left:22px;width:44px"></i><i style="left:67px;width:17px"></i><i style="left:85px;width:44px"></i><i style="left:130px;width:80px"></i><i class="q" style="left:211px;width:161px">190.000</i><i class="t" style="left:373px;width:35px">ST</i><i style="left:409px;width:92px"></i><i style="left:502px;width:55px"></i><i style="left:558px;width:101px"></i><i style="left:660px;width:79px"></i><i style="left:740px;width:17px"></i><i style="left:758px;width:17px"></i><i class="y t" style="left:776px;width:79px">X</i><i style="left:856px;width:68px"></i><i style="left:925px;width:9px"></i></div>
<div class="r b" style="top:192px"><i class="s"></i><i style="left:22px;width:44px"></i><i style="left:67px;width:17px"></i><i style="left:85px;width:44px"></i><i style="left:130px;width:80px"></i><i class="q" style="left:211px;width:161px">98.000</i><i class="t" style="left:373px;width:35px">ST</i><i style="left:409px;width:92px"></i><i style="left:502px;width:55px"></i><i style="left:558px;width:101px"></i><i style="left:660px;width:79px"></i><i style="left:740px;width:17px"></i><i style="left:758px;width:17px"></i><i class="y t" style="left:776px;width:79px">X</i><i style="left:856px;width:68px"></i><i style="left:925px;width:9px"></i></div>
<div class="r a" style="top:211px"><i class="s"></i><i style="left:22px;width:44px"></i><i style="left:67px;width:17px"></i><i style="left:85px;width:44px"></i><i style="left:130px;width:80px"></i><i class="q" style="left:211px;width:161px">344.000</i><i class="t" style="left:373px;width:35px">ST</i><i style="left:409px;width:92px"></i><i style="left:502px;width:55px"></i><i style="left:558px;width:101px"></i><i style="left:660px;width:79px"></i><i style="left:740px;width:17px"></i><i style="left:758px;width:17px"></i><i class="y t" style="left:776px;width:79px">X</i><i style="left:856px;width:68px"></i><i style="left:925px;width:9px"></i></div>
<div class="r b" style="top:230px"><i class="s"></i><i style="left:22px;width:44px"></i><i style="left:67px;width:17px"></i><i style="left:85px;width:44px"></i><i style="left:130px;width:80px"></i><i class="q" style="left:211px;width:161px">443.000</i><i class="t" style="left:373px;width:35px">ST</i><i style="left:409px;width:92px"></i><i style="left:502px;width:55px"></i><i style="left:558px;width:101px"></i><i style="left:660px;width:79px"></i><i style="left:740px;width:17px"></i><i style="left:758px;width:17px"></i><i class="y t" style="left:776px;width:79px">X</i><i style="left:856px;width:68px"></i><i style="left:925px;width:9px"></i></div>
<div class="r a" style="top:249px"><i class="s"></i><i style="left:22px;width:44px"></i><i style="left:67px;width:17px"></i><i style="left:85px;width:44px"></i><i style="left:130px;width:80px"></i><i class="q" style="left:211px;width:161px">408.000</i><i class="t" style="left:373px;width:35px">ST</i><i style="left:409px;width:92px"></i><i style="left:502px;width:55px"></i><i style="left:558px;width:101px"></i><i style="left:660px;width:79px"></i><i style="left:740px;width:17px"></i><i style="left:758px;width:17px"></i><i class="y t" style="left:776px;width:79px">X</i><i style="left:856px;width:68px"></i><i style="left:925px;width:9px"></i></div>
<div class="r b" style="top:268px"><i class="s"></i><i style="left:22px;width:44px"></i><i style="left:67px;width:17px"></i><i style="left:85px;width:44px"></i><i style="left:130px;width:80px"></i><i class="q" style="left:211px;width:161px">330.000</i><i class="t" style="left:373px;width:35px">ST</i><i style="left:409px;width:92px"></i><i style="left:502px;width:55px"></i><i style="left:558px;width:101px"></i><i style="left:660px;width:79px"></i><i style="left:740px;width:17px"></i><i style="left:758px;width:17px"></i><i class="y t" style="left:776px;width:79px">X</i><i style="left:856px;width:68px"></i><i style="left:925px;width:9px"></i></div>
<div class="r a" style="top:287px"><i class="s"></i><i style="left:22px;width:44px"></i><i style="left:67px;width:17px"></i><i style="left:85px;width:44px"></i><i style="left:130px;width:80px"></i><i class="q" style="left:211px;width:161px">330.000</i><i class="t" style="left:373px;width:35px">ST</i><i style="left:409px;width:92px"></i><i style="left:502px;width:55px"></i><i style="left:558px;width:101px"></i><i style="left:660px;width:79px"></i><i style="left:740px;width:17px"></i><i style="left:758px;width:17px"></i><i class="y t" style="left:776px;width:79px">X</i><i style="left:856px;width:68px"></i><i style="left:925px;width:9px"></i></div>
<div class="r b" style="top:306px"><i class="s"></i><i style="left:22px;width:44px"></i><i style="left:67px;width:17px"></i><i style="left:85px;width:44px"></i><i style="left:130px;width:80px"></i><i class="q" style="left:211px;width:161px">267.000</i><i class="t" style="left:373px;width:35px">ST</i><i style="left:409px;width:92px"></i><i style="left:502px;width:55px"></i><i style="left:558px;width:101px"></i><i style="left:660px;width:79px"></i><i style="left:740px;width:17px"></i><i style="left:758px;width:17px"></i><i class="y t" style="left:776px;width:79px">X</i><i style="left:856px;width:68px"></i><i style="left:925px;width:9px"></i></div>
<div class="r a" style="top:325px"><i class="s"></i><i style="left:22px;width:44px"></i><i style="left:67px;width:17px"></i><i style="left:85px;width:44px"></i><i style="left:130px;width:80px"></i><i class="q" style="left:211px;width:161px">129.000</i><i class="t" style="left:373px;width:35px">ST</i><i style="left:409px;width:92px"></i><i style="left:502px;width:55px"></i><i style="left:558px;width:101px"></i><i style="left:660px;width:79px"></i><i style="left:740px;width:17px"></i><i style="left:758px;width:17px"></i><i class="y t" style="left:776px;width:79px">X</i><i style="left:856px;width:68px"></i><i style="left:925px;width:9px"></i></div>
<div class="r b" style="top:344px"><i class="s"></i><i style="left:22px;width:44px"></i><i style="left:67px;width:17px"></i><i style="left:85px;width:44px"></i><i style="left:130px;width:80px"></i><i class="q" style="left:211px;width:161px">99.000</i><i class="t" style="left:373px;width:35px">ST</i><i style="left:409px;width:92px"></i><i style="left:502px;width:55px"></i><i style="left:558px;width:101px"></i><i style="left:660px;width:79px"></i><i style="left:740px;width:17px"></i><i style="left:758px;width:17px"></i><i class="y t" style="left:776px;width:79px">X</i><i style="left:856px;width:68px"></i><i style="left:925px;width:9px"></i></div>
<div class="r a" style="top:363px"><i class="s"></i><i style="left:22px;width:44px"></i><i style="left:67px;width:17px"></i><i style="left:85px;width:44px"></i><i style="left:130px;width:80px"></i><i class="q" style="left:211px;width:161px">65.000</i><i class="t" style="left:373px;width:35px">ST</i><i style="left:409px;width:92px"></i><i style="left:502px;width:55px"></i><i style="left:558px;width:101px"></i><i style="left:660px;width:79px"></i><i style="left:740px;width:17px"></i><i style="left:758px;width:17px"></i><i class="y t" style="left:776px;width:79px">X</i><i style="left:856px;width:68px"></i><i style="left:925px;width:9px"></i></div>
<div class="r b" style="top:382px"><i class="s"></i><i style="left:22px;width:44px"></i><i style="left:67px;width:17px"></i><i style="left:85px;width:44px"></i><i style="left:130px;width:80px"></i><i class="q" style="left:211px;width:161px">112.000</i><i class="t" style="left:373px;width:35px">ST</i><i style="left:409px;width:92px"></i><i style="left:502px;width:55px"></i><i style="left:558px;width:101px"></i><i style="left:660px;width:79px"></i><i style="left:740px;width:17px"></i><i style="left:758px;width:17px"></i><i class="y t" style="left:776px;width:79px">X</i><i style="left:856px;width:68px"></i><i style="left:925px;width:9px"></i></div>
<div class="r a" style="top:401px"><i class="s"></i><i style="left:22px;width:44px"></i><i style="left:67px;width:17px"></i><i style="left:85px;width:44px"></i><i style="left:130px;width:80px"></i><i class="q" style="left:211px;width:161px">70.000</i><i class="t" style="left:373px;width:35px">ST</i><i style="left:409px;width:92px"></i><i style="left:502px;width:55px"></i><i style="left:558px;width:101px"></i><i style="left:660px;width:79px"></i><i style="left:740px;width:17px"></i><i style="left:758px;width:17px"></i><i class="y t" style="left:776px;width:79px">X</i><i style="left:856px;width:68px"></i><i style="left:925px;width:9px"></i></div>
<div class="r b" style="top:420px"><i class="s"></i><i style="left:22px;width:44px"></i><i style="left:67px;width:17px"></i><i style="left:85px;width:44px"></i><i style="left:130px;width:80px"></i><i class="q" style="left:211px;width:161px">201.000</i><i class="t" style="left:373px;width:35px">ST</i><i style="left:409px;width:92px"></i><i style="left:502px;width:55px"></i><i style="left:558px;width:101px"></i><i style="left:660px;width:79px"></i><i style="left:740px;width:17px"></i><i style="left:758px;width:17px"></i><i class="y t" style="left:776px;width:79px">X</i><i style="left:856px;width:68px"></i><i style="left:925px;width:9px"></i></div>
<div class="r a" style="top:439px"><i class="s"></i><i style="left:22px;width:44px"></i><i style="left:67px;width:17px"></i><i style="left:85px;width:44px"></i><i style="left:130px;width:80px"></i><i class="q" style="left:211px;width:161px">337.000</i><i class="t" style="left:373px;width:35px">ST</i><i style="left:409px;width:92px"></i><i style="left:502px;width:55px"></i><i style="left:558px;width:101px"></i><i style="left:660px;width:79px"></i><i style="left:740px;width:17px"></i><i style="left:758px;width:17px"></i><i class="y t" style="left:776px;width:79px">X</i><i style="left:856px;width:68px"></i><i style="left:925px;width:9px"></i></div>
<div class="r b" style="top:458px"><i class="s"></i><i style="left:22px;width:44px"></i><i style="left:67px;width:17px"></i><i style="left:85px;width:44px"></i><i style="left:130px;width:80px"></i><i class="q" style="left:211px;width:161px">190.000</i><i class="t" style="left:373px;width:35px">ST</i><i style="left:409px;width:92px"></i><i style="left:502px;width:55px"></i><i style="left:558px;width:101px"></i><i style="left:660px;width:79px"></i><i style="left:740px;width:17px"></i><i style="left:758px;width:17px"></i><i class="y t" style="left:776px;width:79px">X</i><i style="left:856px;width:68px"></i><i style="left:925px;width:9px"></i></div>
<div class="r a" style="top:477px"><i class="s"></i><i style="left:22px;width:44px"></i><i style="left:67px;width:17px"></i><i style="left:85px;width:44px"></i><i style="left:130px;width:80px"></i><i class="q" style="left:211px;width:161px">98.000</i><i class="t" style="left:373px;width:35px">ST</i><i style="left:409px;width:92px"></i><i style="left:502px;width:55px"></i><i style="left:558px;width:101px"></i><i style="left:660px;width:79px"></i><i style="left:740px;width:17px"></i><i style="left:758px;width:17px"></i><i class="y t" style="left:776px;width:79px">X</i><i style="left:856px;width:68px"></i><i style="left:925px;width:9px"></i></div>
<div class="r b" style="top:496px"><i class="s"></i><i style="left:22px;width:44px"></i><i style="left:67px;width:17px"></i><i style="left:85px;width:44px"></i><i style="left:130px;width:80px"></i><i class="q" style="left:211px;width:161px">344.000</i><i class="t" style="left:373px;width:35px">ST</i><i style="left:409px;width:92px"></i><i style="left:502px;width:55px"></i><i style="left:558px;width:101px"></i><i style="left:660px;width:79px"></i><i style="left:740px;width:17px"></i><i style="left:758px;width:17px"></i><i class="y t" style="left:776px;width:79px">X</i><i style="left:856px;width:68px"></i><i style="left:925px;width:9px"></i></div>
<div class="r a" style="top:515px"><i class="s"></i><i style="left:22px;width:44px"></i><i style="left:67px;width:17px"></i><i style="left:85px;width:44px"></i><i style="left:130px;width:80px"></i><i class="q" style="left:211px;width:161px">443.000</i><i class="t" style="left:373px;width:35px">ST</i><i style="left:409px;width:92px"></i><i style="left:502px;width:55px"></i><i style="left:558px;width:101px"></i><i style="left:660px;width:79px"></i><i style="left:740px;width:17px"></i><i style="left:758px;width:17px"></i><i class="y t" style="left:776px;width:79px">X</i><i style="left:856px;width:68px"></i><i style="left:925px;width:9px"></i></div>
<div class="r b" style="top:534px"><i class="s"></i><i style="left:22px;width:44px"></i><i style="left:67px;width:17px"></i><i style="left:85px;width:44px"></i><i style="left:130px;width:80px"></i><i class="q" style="left:211px;width:161px">408.000</i><i class="t" style="left:373px;width:35px">ST</i><i style="left:409px;width:92px"></i><i style="left:502px;width:55px"></i><i style="left:558px;width:101px"></i><i style="left:660px;width:79px"></i><i style="left:740px;width:17px"></i><i style="left:758px;width:17px"></i><i class="y t" style="left:776px;width:79px">X</i><i style="left:856px;width:68px"></i><i style="left:925px;width:9px"></i></div>
<div style="position:absolute;left:0;top:546px;width:935px;height:1px;background:#4b6f7a"></div>
</div>
<!-- focused cell + red highlight -->
<div class="abs" style="left:782px;top:156px;width:79px;height:2px;background:#4a7380"></div>
<div class="abs" style="left:782px;top:158px;width:79px;height:18px;background:linear-gradient(#ffe27e,#ffea92 40%,#ffe98e);font-size:14px;line-height:16px;padding-left:1px">X</div>
<div class="abs" style="left:849px;top:159px;width:10px;height:16px;background:#c9e1e9;border-left:1px solid #eefaff"></div>
<svg style="left:850px;top:162px;width:9px;height:10px" viewBox="0 0 9 10" shape-rendering="crispEdges"><path d="M3.500 3v-2h4.500v3" fill="none" stroke="#000" stroke-width="1.200"/><rect x="1" y="3.500" width="6" height="5" fill="#fff" stroke="#000" stroke-width="1.400"/></svg>
<div class="abs" style="left:779px;top:152px;width:81px;height:23px;border:3px solid #f5111a;border-radius:5px"></div>
<!-- vertical scrollbar -->
<div class="sb" style="left:942px;top:158px"><svg viewBox="0 0 15 15"><path d="M3.5 10h8l-4-4.5z" fill="#000"/></svg></div>
<div class="sb" style="left:942px;top:176px"><svg viewBox="0 0 15 15"><path d="M3.5 5.5h8l-4 4.5z" fill="#000"/></svg></div>
<div class="trk" style="left:942px;top:194px;width:17px;height:453px"></div>
<div class="thumb" style="left:943px;top:195px;width:15px;height:42px"></div>
<div class="sb" style="left:942px;top:648px"><svg viewBox="0 0 15 15"><path d="M3.5 10h8l-4-4.5z" fill="#000"/></svg></div>
<div class="sb" style="left:942px;top:666px"><svg viewBox="0 0 15 15"><path d="M3.5 5.5h8l-4 4.5z" fill="#000"/></svg></div>
<!-- horizontal scrollbar -->
<div class="sb" style="left:28px;top:686px"><svg viewBox="0 0 15 15"><path d="M9.5 3.5v8l-4.5-4z" fill="#000"/></svg></div>
<div class="sb" style="left:46px;top:686px"><svg viewBox="0 0 15 15"><path d="M5.5 3.5v8l4.5-4z" fill="#000"/></svg></div>
<div class="trk" style="left:64px;top:686px;width:876px;height:17px"></div>
<div class="thumb" style="left:587px;top:687px;width:200px;height:15px"></div>
<!-- IME language bar -->
<div id="ime" class="abs">
<svg style="left:2px;top:5px;width:6px;height:17px" viewBox="0 0 6 17" shape-rendering="crispEdges"><g fill="#3d8df0"><rect x="1" y="1" width="2" height="2"/><rect x="3" y="4" width="2" height="2"/><rect x="1" y="7" width="2" height="2"/><rect x="3" y="10" width="2" height="2"/><rect x="1" y="13" width="2" height="2"/></g><g fill="#0a3a9a"><rect x="2" y="2" width="1" height="1"/><rect x="4" y="5" width="1" height="1"/><rect x="2" y="8" width="1" height="1"/><rect x="4" y="11" width="1" height="1"/><rect x="2" y="14" width="1" height="1"/></g></svg>
<span style="left:13px;top:5px;width:16px;height:16px;background:#2b68cc"></span>
<span style="left:15px;top:6px;font-size:13px;line-height:14px">JP</span>
<svg style="left:35px;top:6px;width:17px;height:14px" viewBox="0 0 17 14"><path d="M3.500 1c1 1.500 1.500-1 2.500.5s1.500-1 2.500.5 1.500-1 2.500.5" fill="none" stroke="#000" stroke-width="1"/><rect x=".8" y="3.800" width="15" height="9" rx="1.500" fill="#fff" stroke="#000" stroke-width="1.200"/><path d="M3 6.500h11M3 8.500h11M3 10.500h11" stroke="#000" stroke-width="1" stroke-dasharray="1 1"/></svg>
<svg style="left:55px;top:4px;width:17px;height:17px" viewBox="0 0 17 17"><circle cx="6.500" cy="7" r="6" fill="#e8101c" stroke="#7a0810" stroke-width=".8"/><ellipse cx="4.500" cy="4.500" rx="2.400" ry="1.600" fill="#f870c8" transform="rotate(-35 4.500 4.500)"/><path d="M5 13c2 2.500 6 2.500 7.500.5" fill="none" stroke="#000" stroke-width="1.300"/><path d="M13.500 1v8" stroke="#f4e020" stroke-width="1.600" stroke-dasharray="1 1"/><path d="M14.800 1v8" stroke="#e81020" stroke-width="1"/><path d="M12.500 9h3l-1.200 6h-1z" fill="#d8d8d8" stroke="#000" stroke-width=".8"/></svg>
<span style="left:84px;top:4px;font-size:16px;line-height:18px;font-family:'Liberation Sans','IPAGothic',sans-serif;letter-spacing:1px;transform:scaleX(.8);transform-origin:0 0">A</span>
<span style="left:94px;top:4px;font-size:16px;line-height:18px;font-family:'Liberation Sans','IPAGothic',sans-serif">般</span>
<svg style="left:115px;top:4px;width:17px;height:18px" viewBox="0 0 17 18"><circle cx="11.500" cy="5.500" r="4.300" fill="#c8dcec" stroke="#5a5a6a" stroke-width="1.200"/><path d="M3.500 2l2 7" stroke="#e81020" stroke-width="2"/><path d="M6.500 1l1 8" stroke="#f4d820" stroke-width="1.800"/><path d="M1.500 8.500h10c0 3-1.500 5-2.500 6.500h-5c-1-1.500-2.500-3.500-2.500-6.500z" fill="#f0e8a0" stroke="#4a4020" stroke-width=".9"/><path d="M11.500 10c3-.5 3 3 -.8 3" fill="none" stroke="#4a4020" stroke-width="1"/><ellipse cx="6.500" cy="15.500" rx="4.500" ry="1.300" fill="#d8c860" stroke="#4a4020" stroke-width=".7"/><path d="M2.500 10.500h7" stroke="#fff8d0" stroke-width="1.200"/></svg>
<svg style="left:135px;top:5px;width:17px;height:16px" viewBox="0 0 17 16"><path d="M5.500 4c0-3.500 6-4.500 6.500-1" fill="none" stroke="#000" stroke-width="1.300"/><path d="M.8 6.500l9-3.500 6 2.500v6l-9 4-6-3z" fill="#e8a0a8" stroke="#7a4048" stroke-width=".8"/><path d="M.8 6.500l6 3 9-4M6.800 9.500v6" fill="none" stroke="#a05860" stroke-width=".9"/><path d="M1 8.500l5.800 3 9-4" fill="none" stroke="#f8d0d0" stroke-width=".9"/><rect x="8.500" y="8" width="2.500" height="2" fill="#7a4048" transform="skewY(-22) translate(0 4)"/></svg>
<svg style="left:158px;top:6px;width:15px;height:15px" viewBox="0 0 15 15"><path d="M1 .8h12.500v10.500h-3l1.500 3-4.500-3h-6.500z" fill="#fdfbd0" stroke="#000" stroke-width="1.300" stroke-linejoin="round"/><text x="3.800" y="9.800" font-family="Liberation Sans,sans-serif" font-weight="bold" font-size="10.500" fill="#10107a">?</text></svg>
<span style="left:181px;top:2px;font-size:8px;line-height:9px;font-weight:bold;letter-spacing:.2px;font-family:'Liberation Mono','Liberation Sans',monospace">CAPS</span>
<span style="left:181px;top:14px;font-size:8px;line-height:9px;font-weight:bold;letter-spacing:.2px;font-family:'Liberation Mono','Liberation Sans',monospace">KANA</span>
<svg style="left:207px;top:8px;width:7px;height:14px" viewBox="0 0 7 14" shape-rendering="crispEdges"><rect x="1" y="0" width="5" height="2" fill="#fff"/><path d="M0 9h7l-3.500 3.500z" fill="#fff" shape-rendering="auto"/></svg>
</div>
<!-- status bar -->
<div id="status" class="abs"></div>
<div class="st" style="left:780px;width:68px">MRBR</div>
<div class="st" style="left:848px;width:51px;padding-left:7px">na-pc</div>
<div class="st" style="left:899px;width:40px">OVR</div>
<div class="st" style="left:939px;width:23px;background:#94bcc7"></div>
<svg style="left:766px;top:734px;width:8px;height:13px" viewBox="0 0 8 13"><path d="M1 1v11l6-5.500z" fill="#b9dde5" stroke="#4d6f7a" stroke-width="1"/></svg>
<svg style="left:832px;top:733px;width:12px;height:13px" viewBox="0 0 12 13" shape-rendering="crispEdges"><rect x=".5" y=".5" width="11" height="12" fill="#fbf8dc" stroke="#000"/><path d="M2 3v5l3-2.500z" fill="#000" shape-rendering="auto"/><path d="M6 4.500h4M6 6.500h4M6 8.500h4" stroke="#000"/></svg>
<svg style="left:940px;top:731px;width:24px;height:19px" viewBox="0 0 24 19"><path d="M22 0L4 18h18z" fill="#8ab0be"/><path d="M22 0L4 18" stroke="#4d6f7a" stroke-width="1" fill="none"/><path d="M23 5L10 18M23 9L14 18M23 13L18 18" stroke="#e8f4f8" stroke-width="1.200"/><path d="M23 6.500L11.500 18M23 10.500L15.500 18M23 14.500L19.500 18" stroke="#6a8e9a" stroke-width="1"/></svg>
<!-- taskbar -->
<div id="taskbar" class="abs"></div>
<div id="start" class="abs">スタート</div>
<svg style="left:10px;top:760px;width:20px;height:19px" viewBox="0 0 20 19"><path d="M2.500 2.500c2.500-1.500 4.500-1.500 7 .3l-1.600 6c-2.500-1.700-4.500-1.700-7-.3z" fill="#f0501c"/><path d="M10.500 3.200c2.500 1.600 4.500 1.600 7.500.2l-1.700 6c-2.800 1.400-4.800 1.400-7.400-.2z" fill="#5cc02c"/><path d="M.6 9.800c2.500-1.500 4.500-1.500 7 .3l-1.600 6c-2.500-1.700-4.500-1.700-7-.3z" fill="#3c78e8" transform="translate(1 0)"/><path d="M8.600 10.500c2.500 1.600 4.500 1.600 7.500.2l-1.700 6c-2.800 1.400-4.800 1.400-7.400-.2z" fill="#f8c820"/></svg>
<div id="task" class="abs">支払保留請求書の解...</div>
<svg style="left:129px;top:763px;width:18px;height:17px" viewBox="0 0 18 17"><rect x="6.500" y=".8" width="9.500" height="8" fill="#e8e8e8" stroke="#4a4a5a" stroke-width=".9"/><rect x="7" y="1.200" width="8.500" height="2" fill="#4a5a9a"/><path d="M8 5h6M8 7h6" stroke="#9a9aaa" stroke-width=".8"/><path d="M.8 10l4-3 5 2.500 4-2 .5 4.500-4.500 3-4.500-2-2 1.500z" fill="#1a3ae0" stroke="#0a1a8a" stroke-width=".8"/><path d="M5.300 14l.2-4M10 15.200l-.2-5" stroke="#0a1a8a" stroke-width=".8"/></svg>
<div id="tray" class="abs"></div>
<div id="clock" class="abs">14:50</div>
<svg style="left:886px;top:762px;width:19px;height:19px" viewBox="0 0 19 19"><circle cx="9.500" cy="9.500" r="8.800" fill="#3fa4f2" stroke="#8fd0fa" stroke-width=".8"/><path d="M11 5.500l-4.500 4 4.500 4" fill="none" stroke="#fff" stroke-width="2.200"/></svg>
<svg style="left:910px;top:763px;width:10px;height:15px" viewBox="0 0 10 15" shape-rendering="crispEdges"><rect x="3" y="0" width="4" height="2" fill="#ddd" stroke="#000" stroke-width=".8"/><rect x=".8" y="2" width="8" height="12" fill="#1a22e0" stroke="#000" stroke-width="1.200"/><rect x="1.500" y="2.500" width="6.500" height="4" fill="#fff"/><rect x="4" y="3" width="2" height="3" fill="#e81020"/><rect x="4" y="11" width="4" height="1.500" fill="#e81020"/><rect x="1.500" y="8" width="1.500" height="4" fill="#20c040"/></svg>
<div id="wm" class="abs">CSDN @东京老树根</div>
</body></html>
